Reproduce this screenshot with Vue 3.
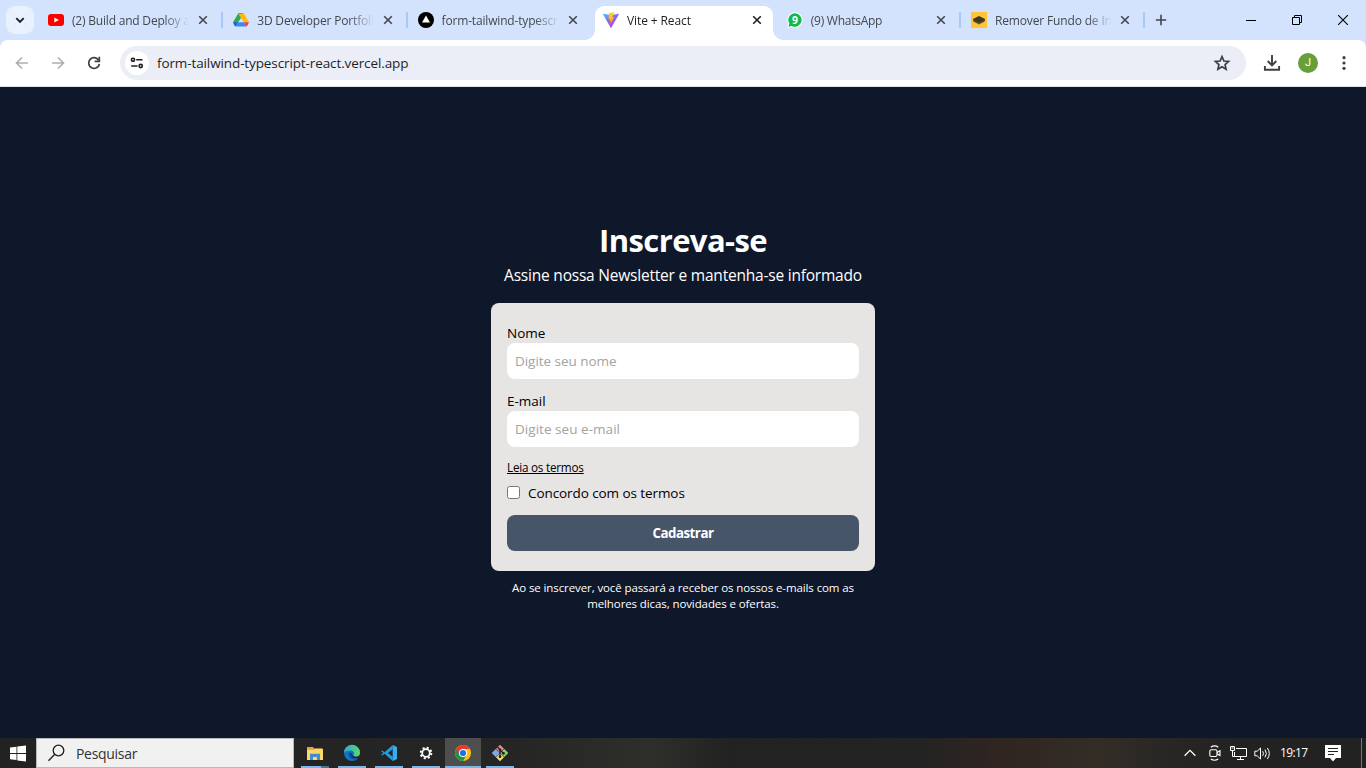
<script setup>
const tabs = [
  { icon: 'youtube', title: '(2) Build and Deploy a', sep: true, cls: 't1' },
  { icon: 'drive', title: '3D Developer Portfoli', sep: true, cls: 't2' },
  { icon: 'vercel', title: 'form-tailwind-typescr', sep: false, cls: 't3' },
  { icon: 'vite', title: 'Vite + React', active: true, cls: 't4' },
  { icon: 'whatsapp', title: '(9) WhatsApp', sep: true, cls: 't5' },
  { icon: 'remove', title: 'Remover Fundo de In', sep: true, cls: 't6' },
]
const fields = [
  { label: 'Nome', hint: 'Digite seu nome', cls: 'f1' },
  { label: 'E-mail', hint: 'Digite seu e-mail', cls: 'f2' },
]
const apps = ['explorer', 'edge', 'code', 'settings', 'chrome', 'git']
</script>

<template>
  <div class="screen">
    <header class="tabstrip">
      <div class="search-tabs">
        <svg width="28" height="28" viewBox="0 0 28 28"><path d="M10.3 12.2l3.7 3.7 3.7-3.7" fill="none" stroke="#1f1f1f" stroke-width="1.9" /></svg>
      </div>
      <div v-for="t in tabs" :key="t.title" class="tab" :class="[{ active: t.active, sep: t.sep }, t.cls]">
        <svg class="fav" width="16" height="16" viewBox="0 0 16 16">
          <template v-if="t.icon === 'youtube'">
            <rect x="0" y="2" width="16" height="12" rx="3" fill="#f00" />
            <path d="M6.3 5.4v5.2L10.9 8z" fill="#fff" />
          </template>
          <template v-else-if="t.icon === 'drive'">
            <path d="M5.3 1.3h5.4L8 6z" fill="#188038" />
            <path d="M5.3 1.3L0 10.2l2.500 4L8 6z" fill="#34a853" />
            <path d="M10.7 1.3L16 10.2h-5.2L5.6 2z" fill="#fbbc04" />
            <path d="M0 10.2h5.2l-2.4 4.2q-.8-.2-1.3-1z" fill="#1967d2" />
            <path d="M5.2 10.2h5.6l2.4 4.2H2.8z" fill="#4285f4" />
            <path d="M10.8 10.2H16l-1.6 3.2q-.5.8-1.2 1z" fill="#ea4335" />
          </template>
          <template v-else-if="t.icon === 'vercel'">
            <circle cx="8" cy="8" r="8" fill="#000" />
            <path d="M8 3.6l4 7H4z" fill="#fff" />
          </template>
          <template v-else-if="t.icon === 'vite'">
            <defs>
              <linearGradient id="vg" x1="0" y1="0" x2=".6" y2="1"><stop offset="0" stop-color="#41c8ff" /><stop offset=".5" stop-color="#8a67f0" /><stop offset="1" stop-color="#c03ee0" /></linearGradient>
              <linearGradient id="vy" x1="0" y1="0" x2="0" y2="1"><stop offset="0" stop-color="#ffd83a" /><stop offset="1" stop-color="#ffa000" /></linearGradient>
            </defs>
            <path d="M.2 1.8L8 3l7.8-1.2q.3 0 .1.5L8.3 15.8q-.3.3-.6 0L0 2.3q-.1-.4.2-.5z" fill="url(#vg)" />
            <path d="M11.5 0L5.900 1 5.500 7.200l1.700-.4-.5 2.500 1.200-.3-.7 3.500 4-7.600-1.900.3z" fill="url(#vy)" />
          </template>
          <template v-else-if="t.icon === 'whatsapp'">
            <path d="M8 .2a7.8 7.8 0 1 1-3.400 14.900L.1 16l1.200-4.300A7.800 7.800 0 0 1 8 .2z" fill="#fff" />
            <path d="M8 1.300a6.700 6.700 0 1 1-3.300 12.600l-3.200.8.900-3.100A6.700 6.700 0 0 1 8 1.300z" fill="#12b94a" />
            <text x="8" y="11.700" text-anchor="middle" font-size="10.500" font-weight="700" fill="#fff">9</text>
          </template>
          <template v-else>
            <rect width="16" height="16" fill="#ffc534" />
            <path d="M2 9.600l6 2.900 6-2.900-1.600-.8L8 11 3.600 8.800z" fill="#756020" />
            <path d="M2 7L8 4l6 3v1.400L8 11.300 2 8.400z" fill="#3f3a25" />
          </template>
        </svg>
        <span class="title">{{ t.title }}</span>
        <svg class="close" width="10" height="10" viewBox="0 0 10 10"><path d="M1.200 1.200l7.600 7.600M8.800 1.200L1.200 8.800" stroke="currentColor" stroke-width="1.600" /></svg>
      </div>
      <svg class="newtab" width="12" height="12" viewBox="0 0 12 12"><path d="M6 .8v10.400M.8 6h10.400" stroke="#41454c" stroke-width="1.600" /></svg>
      <div class="winctl">
        <svg width="10" height="10" viewBox="0 0 10 10"><path d="M0 5.500h10" stroke="#000" /></svg>
        <svg width="10" height="10" viewBox="0 0 10 10"><path d="M.5 2.500h7v7h-7zM2.500 2.500v-2h7v7h-2" fill="none" stroke="#000" /></svg>
        <svg width="10" height="10" viewBox="0 0 10 10"><path d="M0 0l10 10M10 0L0 10" stroke="#000" stroke-width="1.100" /></svg>
      </div>
    </header>

    <div class="toolbar-back">
      <nav class="toolbar">
        <svg class="nav" width="20" height="20" viewBox="0 0 20 20"><path d="M16 10H4.800M10 4.500L4.500 10l5.500 5.500" fill="none" stroke="#acadae" stroke-width="1.600" /></svg>
        <svg class="nav" width="20" height="20" viewBox="0 0 20 20"><path d="M4 10h11.200M10 4.500l5.500 5.500-5.500 5.500" fill="none" stroke="#acadae" stroke-width="1.600" /></svg>
        <svg class="nav" width="20" height="20" viewBox="0 0 20 20"><path d="M14.700 7.200A5.400 5.400 0 1 0 15.400 11" fill="none" stroke="#3c3f43" stroke-width="1.700" /><path d="M15.300 3.700v4.700h-4.700" fill="none" stroke="#3c3f43" stroke-width="1.700" /></svg>
        <div class="omnibox">
          <div class="site">
            <svg width="14" height="12" viewBox="0 0 14 12" fill="none" stroke="#1f1f1f" stroke-width="1.600"><circle cx="3" cy="2.800" r="1.600" /><path d="M6.200 2.800h6.300M1.200 9h6.300" /><circle cx="10.700" cy="9" r="1.600" /></svg>
          </div>
          <span class="url">form-tailwind-typescript-react.vercel.app</span>
          <svg class="star" width="18" height="18" viewBox="0 0 18 18"><path d="M9 2.700l1.900 4.300 4.700.5-3.500 3.100 1 4.600L9 12.800l-4.100 2.400 1-4.600L2.400 7.500l4.700-.5z" fill="none" stroke="#3c3f43" stroke-width="1.700" /></svg>
        </div>
        <svg class="dl" width="18" height="18" viewBox="0 0 18 18"><path d="M9 1v10M4.700 7l4.300 4.300L13.300 7M1.900 12v3.800h14.200V12" fill="none" stroke="#3c3f43" stroke-width="1.900" /></svg>
        <div class="avatar">J</div>
        <svg class="more" width="4" height="16" viewBox="0 0 4 16" fill="#3c3f43"><circle cx="2" cy="2.700" r="1.600" /><circle cx="2" cy="8" r="1.600" /><circle cx="2" cy="13.300" r="1.600" /></svg>
      </nav>
    </div>

    <main class="page">
      <h1>Inscreva-se</h1>
      <p class="sub">Assine nossa Newsletter e mantenha-se informado</p>
      <form class="card" @submit.prevent>
        <div v-for="f in fields" :key="f.label" class="field" :class="f.cls">
          <label>{{ f.label }}</label>
          <input type="text" :placeholder="f.hint" />
        </div>
        <a class="terms">Leia os termos</a>
        <div class="agree"><input type="checkbox" /><span>Concordo com os termos</span></div>
        <button>Cadastrar</button>
      </form>
      <p class="note"><span>Ao se inscrever, você passará a receber os nossos e-mails com as</span><span>melhores dicas, novidades e ofertas.</span></p>
    </main>

    <footer class="taskbar">
      <div class="start">
        <svg width="16" height="17" viewBox="0 0 16 17" fill="#fff"><path d="M0 2.600L6.500 1.700V8H0zM7.300 1.600L16 .4V8H7.300zM0 8.900h6.500v6.200L0 14.200zM7.300 8.900H16v7.700l-8.700-1.200z" /></svg>
      </div>
      <div class="search">
        <svg width="18" height="18" viewBox="0 0 18 18" fill="none" stroke="#1b1b1b" stroke-width="1.300"><circle cx="11.500" cy="6.500" r="5.300" /><path d="M7.800 10.300L1.500 16.700" /></svg>
        <span>Pesquisar</span>
      </div>
      <div class="apps">
        <div v-for="a in apps" :key="a" class="app" :class="a">
          <svg width="18" height="18" viewBox="0 0 18 18">
            <template v-if="a === 'explorer'">
              <path d="M1 3h6l1.200 1.500H16v4H1z" fill="#e8a33a" />
              <path d="M1 5.800h7l1-1h8V16H1z" fill="#ffd768" />
              <path d="M4 16V9.800h10V16h-3v-3H7v3z" fill="#3d8fcf" />
            </template>
            <template v-else-if="a === 'edge'">
              <defs><linearGradient id="eg" x1="0" y1="0" x2="1" y2=".3"><stop offset="0" stop-color="#2ba6e8" /><stop offset="1" stop-color="#57d66b" /></linearGradient></defs>
              <circle cx="9" cy="9" r="8" fill="#1573c4" />
              <path d="M1 9a8 8 0 0 1 16-.5c0 3-2.500 4.300-5 3.800-1.500-.3-1.700-.8-1.200-1.600.9-1.700-.3-4.200-3.300-4.200C4.500 6.500 1.500 7.500 1 9z" fill="url(#eg)" />
              <path d="M6.300 8.500c-1.600 4 1.500 7.300 5.700 6.800q2-.3 3.800-2c-3 1-6.800.2-7-3.400q.1-1.700-2.500-1.400z" fill="#0c4ba3" />
              <path d="M9.500 8.300c-1.400 2 .4 4.700 3.700 4.700l3.400-1.300-.7 2c-4 1.500-7.600-.6-7.500-3.700z" fill="#252525" />
            </template>
            <template v-else-if="a === 'code'">
              <path d="M12.700 1L4.600 8.200 2.300 6.400 1 7.100 3.300 9 1 10.900l1.300.7 2.300-1.800 8.100 7.200v-4.300L8 9l4.700-3.700z" fill="#219adf" />
              <path d="M12.700 1L17 3v12l-4.300 2z" fill="#38adf0" />
            </template>
            <template v-else-if="a === 'settings'">
              <circle cx="9" cy="9" r="5.300" fill="none" stroke="#fff" stroke-width="2" stroke-dasharray="2.080 2.080" />
              <circle cx="9" cy="9" r="3.800" fill="none" stroke="#fff" stroke-width="1.800" />
            </template>
            <template v-else-if="a === 'chrome'">
              <circle cx="9" cy="9" r="8" fill="#fbc116" />
              <path d="M9 9L2.100 5A8 8 0 0 0 9 17l3.500-6z" fill="#229342" />
              <path d="M9 9V5h6.900A8 8 0 0 0 2.100 5l3.500 6z" fill="#e33b2e" />
              <circle cx="9" cy="9" r="4" fill="#fff" />
              <circle cx="9" cy="9" r="3.100" fill="#1a73e8" />
            </template>
            <template v-else>
              <path d="M9 .7L13 4.700 9 8.700 5 4.700z" fill="#e9897f" />
              <path d="M13.300 5L17.300 9l-4 4-4-4z" fill="#8fd06a" />
              <path d="M4.700 5L8.700 9l-4 4-4-4z" fill="#7ea6e8" />
              <path d="M9 9.300l4 4-4 4-4-4z" fill="#f4df75" />
              <path d="M6.500 3l2.500 2.500v7.500M9 6l3.500 3.300" fill="none" stroke="#202020" stroke-width="1.200" />
              <g fill="#202020"><circle cx="9" cy="5.800" r="1.300" /><circle cx="9" cy="12.700" r="1.400" /><circle cx="12.500" cy="9.300" r="1.400" /></g>
            </template>
          </svg>
        </div>
      </div>
      <div class="tray">
        <svg class="chev" width="12" height="8" viewBox="0 0 12 8"><path d="M.6 6.800L6 1.400l5.400 5.400" fill="none" stroke="#fff" stroke-width="1.300" /></svg>
        <svg class="meet" width="12" height="16" viewBox="0 0 12 16" fill="none" stroke="#fff" stroke-width="1.100"><rect x=".8" y="4.700" width="7.200" height="6.800" rx="1.500" /><path d="M8 7.500l3-1.700v4.700L8 8.800M1.800 2.200Q5.500-.5 9.300 2.200M1.800 14Q5.500 16.500 9.300 14" /></svg>
        <svg class="net" width="17" height="15" viewBox="0 0 17 15" fill="none" stroke="#fff"><path d="M6 2.500h10.500v8H4.500V6M10.500 10.500v3M7 13.500h7M.5.500h4v4h-4zM2.500 4.500v6h2M1.500 2h2" /></svg>
        <svg class="vol" width="17" height="15" viewBox="0 0 17 15" fill="none" stroke="#fff"><path d="M.8 5.200h2.400L6.500 2v11L3.200 9.800H.8zM8.700 5.200q1.500 2.300 0 4.600M11 3.600q2.700 3.900 0 7.800M13.400 2q3.800 5.500 0 11" /></svg>
        <span class="clock">19:17</span>
        <svg class="msg" width="16" height="17" viewBox="0 0 16 17"><path d="M0 0h16v13h-5l-3 3.500L5 13H0z" fill="#fff" /><path d="M3 3.500h10M3 6.500h10M3 9.500h6" stroke="#222" /></svg>
      </div>
    </footer>
  </div>
</template>

<style>
body { margin: 0; overflow: hidden; }
</style>

<style scoped>
.screen { width: 1366px; height: 768px; display: flex; flex-direction: column; font-family: "Open Sans", "Noto Sans", sans-serif; overflow: hidden; }
.screen * { box-sizing: border-box; }
svg { display: block; flex: none; }

.tabstrip { height: 40px; flex: none; background: #d3e2fd; display: flex; align-items: center; padding-left: 6px; }
.search-tabs { width: 28px; height: 28px; border-radius: 9px; background: #e9f0fe; margin-right: 4px; flex: none; }
.tab { position: relative; flex: none; width: 184.400px; height: 40px; padding-left: 10px; display: flex; align-items: center; font-size: 12px; color: #44484f; }
.tab.sep::after { content: ""; position: absolute; right: -1px; top: 12px; width: 2px; height: 16px; background: #a8c7fa; }
.fav { position: relative; z-index: 1; }
.title { position: relative; z-index: 1; width: 118px; margin-left: 8px; padding-top: 1px; line-height: 20px; white-space: nowrap; mask-image: linear-gradient(to right, #000 92px, transparent 117px); }
.close { position: relative; z-index: 1; margin-left: 8px; color: #44484f; }
.t1 .title { letter-spacing: -.2px; }
.t2 .title { letter-spacing: -.17px; }
.t3 .title { letter-spacing: -.17px; }
.t4 .title { letter-spacing: -.1px; }
.t5 .title { letter-spacing: -.25px; }
.t6 .title { letter-spacing: -.15px; }
.t2, .t3 { padding-left: 10.800px; }
.t4 { padding-left: 11.800px; }
.t4 .close { margin-left: 7.200px; }
.t5, .t6 { padding-left: 11.200px; }
.t6 { padding-left: 11px; }
.t5 .close, .t6 .close { margin-left: 7px; }
.active { color: #1f1f1f; }
.active .close { color: #1f1f1f; }
.active::before { content: ""; position: absolute; left: 3.400px; right: 3px; top: 6px; bottom: 0; background: #fff; border-radius: 9px 9px 0 0; }
.active::after { content: ""; position: absolute; left: -6.600px; right: -7px; bottom: 0; height: 10px; background: radial-gradient(circle at 0 0, transparent 9.500px, #fff 10px) left / 10px 10px no-repeat, radial-gradient(circle at 100% 0, transparent 9.500px, #fff 10px) right / 10px 10px no-repeat; }
.newtab { margin-left: 10.600px; }
.winctl { margin-left: auto; display: flex; gap: 36px; padding-right: 18px; }

.toolbar-back { background: #d3e2fd; flex: none; }
.toolbar { height: 47px; background: #fff; border-bottom: 1px solid #dfe3ea; border-radius: 8px 8px 0 0; display: flex; align-items: center; padding-left: 12px; }
.nav { margin-right: 16px; }
.omnibox { width: 1126px; height: 34px; border-radius: 17px; background: #ebeef7; display: flex; align-items: center; padding-left: 5px; flex: none; }
.site { width: 24px; height: 24px; border-radius: 50%; background: #fff; display: grid; place-items: center; }
.url { margin-left: 8px; font-size: 13.500px; line-height: 20px; color: #1f1f1f; letter-spacing: -.11px; }
.star { margin-left: auto; margin-right: 15px; }
.dl { margin-left: 17px; }
.avatar { width: 20px; height: 20px; margin-left: 17px; border-radius: 50%; background: #689f38; color: #fff; font-size: 11px; line-height: 20px; text-align: center; font-family: Roboto, sans-serif; }
.more { margin-left: 24px; }

.page { height: 651px; flex: none; background: #0f172a; color: #fff; display: flex; flex-direction: column; align-items: center; padding-top: 133px; }
h1 { margin: 0; font-size: 31px; line-height: 40px; font-weight: 700; letter-spacing: -.6px; }
.sub { margin: 3px 0 0; font-size: 15.500px; line-height: 24px; white-space: nowrap; letter-spacing: -.21px; }
.card { width: 384px; height: 268px; margin-top: 16px; padding: 20px 16px; background: #e7e5e4; border-radius: 8px; color: #000; display: flex; flex-direction: column; }
.field { display: flex; flex-direction: column; margin-bottom: 12px; font-size: 14px; }
.field label { line-height: 20px; height: 20px; font-size: 13.500px; }
.field input { height: 36px; border: 0; border-radius: 8px; padding: 0 8px; background: #fff; font: inherit; font-size: 13.500px; letter-spacing: -.04px; }
.f2 input { letter-spacing: .04px; }
.field input::placeholder { color: #a3a3a3; opacity: 1; }
.terms { align-self: flex-start; font-size: 11.700px; line-height: 16px; height: 16px; text-decoration: underline; letter-spacing: -.22px; }
.agree { display: flex; align-items: flex-start; height: 20px; margin-top: 8px; font-size: 13.500px; line-height: 20px; letter-spacing: -.08px; }
.agree input { margin: 3px 8px 0 0; width: 13px; height: 13px; }
button { height: 36px; margin-top: 12px; border: 0; border-radius: 8px; background: #475569; color: #fff; font: inherit; font-size: 13.300px; font-weight: 700; letter-spacing: -.5px; }
.note { margin: 9px 0 0; font-size: 11.500px; line-height: 16px; display: flex; flex-direction: column; align-items: center; white-space: nowrap; letter-spacing: -.1px; }

.taskbar { height: 30px; flex: none; display: flex; background: linear-gradient(to right, #222 0, #252525 510px, #2e2e2a 650px, #222 730px, #232323 920px, #302521 1000px, #332d26 1100px, #292725 1160px, #222 1240px); }
.start { width: 36px; display: grid; place-items: center; }
.search { width: 258px; background: #f1f1f1; border: 1px solid #b9b9b9; display: flex; align-items: center; padding-left: 10px; font-size: 14px; color: #333; }
.search span { margin-left: 11px; letter-spacing: -.3px; }
.apps { display: flex; padding-left: 3px; }
.app { width: 37px; height: 30px; position: relative; display: grid; place-items: center; }
.app::after { content: ""; position: absolute; left: 4px; width: 28px; bottom: 0; height: 2px; background: #76b9ed; }
.app svg { margin-right: 1px; }
.explorer::after { background: linear-gradient(to right, #76b9ed 20px, #4c7594 20px); }
.chrome { background: linear-gradient(#4e4e4e, #4e4e4e) no-repeat 0 0 / 36px 30px; }
.chrome::after { left: 0; width: 36px; }
.tray { margin-left: auto; display: flex; align-items: center; color: #fff; padding-right: 4px; height: 30px; border-right: 1px solid #777; margin-right: 4px; }
.meet { margin-left: 13px; }
.net { margin-left: 9px; }
.vol { margin-left: 7px; }
.clock { margin-left: 9px; width: 28px; font-size: 12px; line-height: 16px; letter-spacing: -.6px; white-space: nowrap; }
.msg { margin-left: 17px; margin-right: 16px; }
</style>
